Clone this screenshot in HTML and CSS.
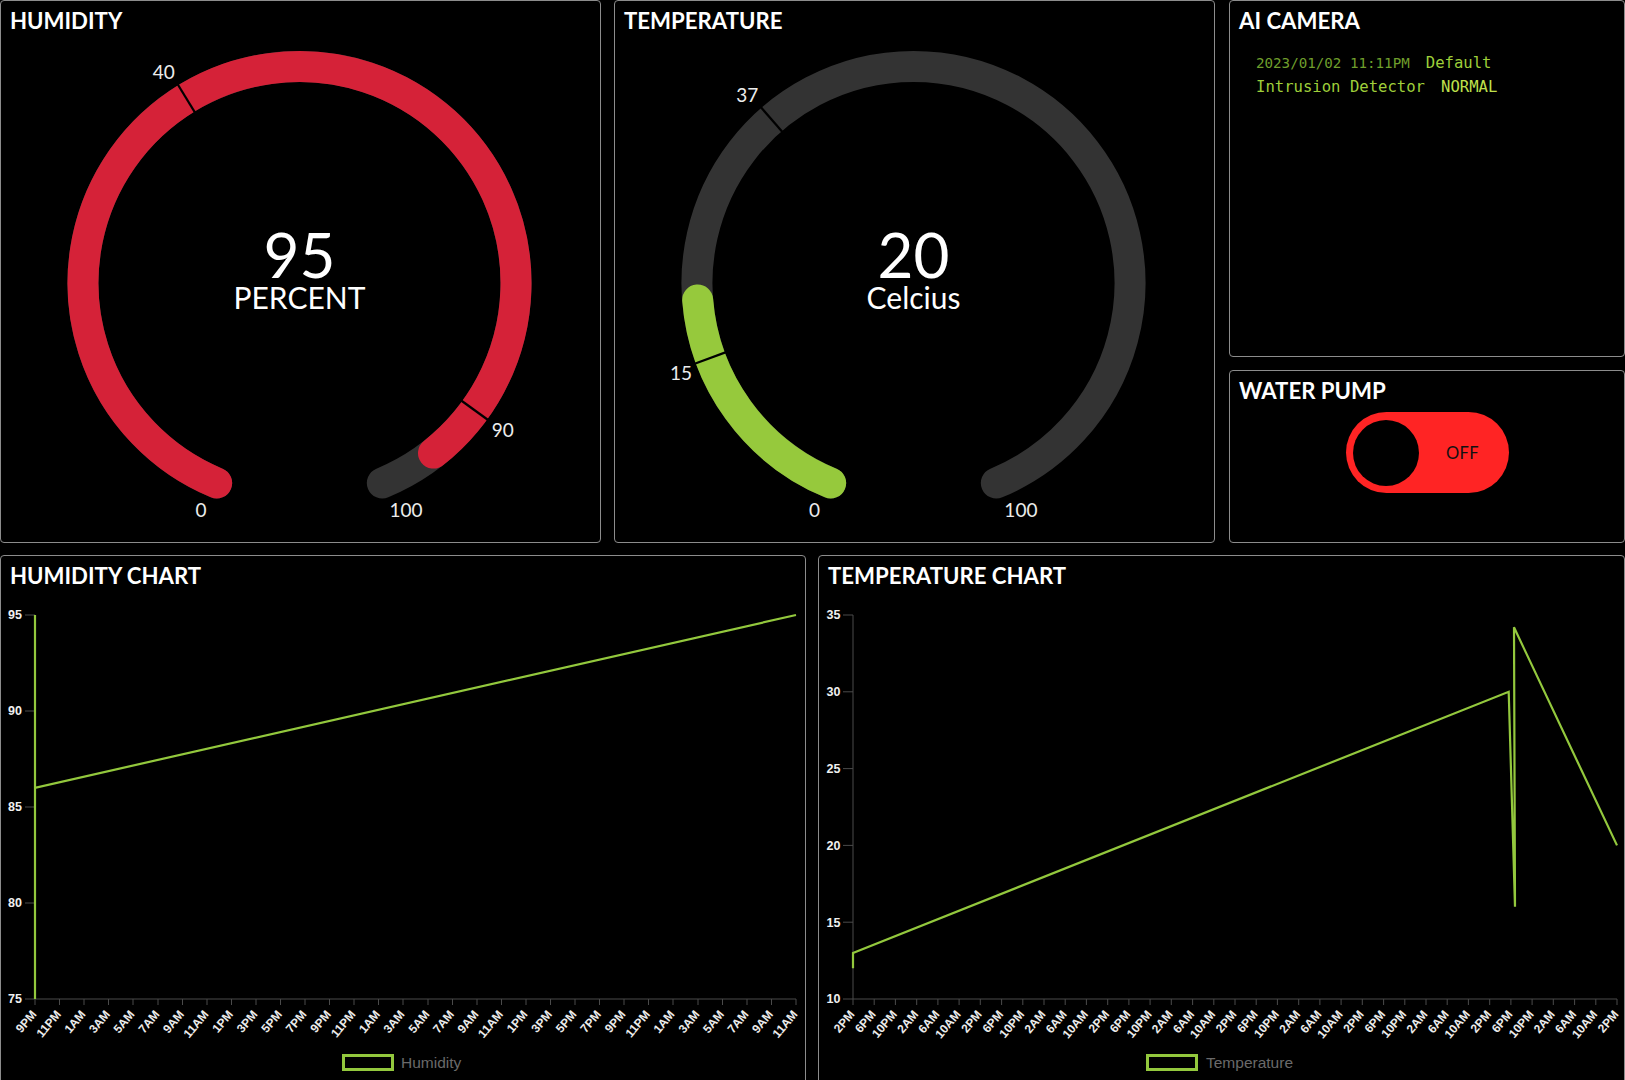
FILE: index.html
```html
<!DOCTYPE html>
<html lang="en">
<head>
<meta charset="utf-8">
<title>Dashboard</title>
<link rel="stylesheet" href="styles.css">
</head>
<body>
<main class="dash">
  <div class="row-top">
    <section class="card">
      <h2 class="card-title">HUMIDITY</h2>
      <svg class="gauge" viewBox="0 0 599 501" width="599" height="501">
        <path class="arc-track" d="M215.65 442.02 A216.5 216.5 0 1 1 381.35 442.02"/>
        <path class="arc-red" d="M215.65 442.02 A216.5 216.5 0 1 1 432.5 412.05"/>
        <line class="tick" x1="194.5" y1="72.3" x2="176.2" y2="42.5"/>
        <line class="tick" x1="459.5" y1="359" x2="487.8" y2="379.5"/>
        <text class="g-label" x="200" y="469" dy=".36em">0</text>
        <text class="g-label" x="405" y="469" dy=".36em">100</text>
        <text class="g-label" x="162.7" y="31.5" dy=".36em">40</text>
        <text class="g-label" x="501.7" y="389.5" dy=".36em">90</text>
        <text class="g-value" x="298.5" y="236.8">95</text>
        <text class="g-unit" x="298.5" y="268">PERCENT</text>
      </svg>
    </section>
    <section class="card">
      <h2 class="card-title">TEMPERATURE</h2>
      <svg class="gauge" viewBox="0 0 599 501" width="599" height="501">
        <path class="arc-track" d="M215.65 442.02 A216.5 216.5 0 1 1 381.35 442.02"/>
        <path class="arc-green" d="M215.65 442.02 A216.5 216.5 0 0 1 82.67 258.99"/>
        <line class="tick" x1="111.8" y1="310.9" x2="79" y2="323"/>
        <line class="tick" x1="168.1" y1="91.7" x2="145.1" y2="65.3"/>
        <text class="g-label" x="199.6" y="469" dy=".36em">0</text>
        <text class="g-label" x="405.9" y="469" dy=".36em">100</text>
        <text class="g-label" x="132.3" y="53.8" dy=".36em">37</text>
        <text class="g-label" x="66" y="332.5" dy=".36em">15</text>
        <text class="g-value" x="298.5" y="236.8">20</text>
        <text class="g-unit" x="298.5" y="268">Celcius</text>
      </svg>
    </section>
    <div class="side">
      <section class="card camera">
        <h2 class="card-title">AI CAMERA</h2>
        <div class="log">
          <div class="log-row"><span class="log-time">2023/01/02 11:11PM</span><span class="log-msg">Default</span></div>
          <div class="log-row"><span class="log-msg">Intrusion Detector</span><span class="log-status">NORMAL</span></div>
        </div>
      </section>
      <section class="card pump">
        <h2 class="card-title">WATER PUMP</h2>
        <div class="pump-body">
          <div class="toggle">
            <span class="knob"></span>
            <span class="toggle-text">OFF</span>
          </div>
        </div>
      </section>
    </div>
  </div>
  <div class="row-bottom">
    <section class="card chart-card">
      <h2 class="card-title">HUMIDITY CHART</h2>
      <svg class="chart" viewBox="0 0 804 498" width="804" height="498">
        <path class="axis" d="M34 19V403H795"/>
        <path class="axis" d="M24 19H34M24 115H34M24 211H34M24 307H34M24 403H34"/>
        <path class="axis" d="M34 403v6M58.5 403v6M83 403v6M107.5 403v6M132 403v6M157 403v6M181.5 403v6M206 403v6M230.5 403v6M255 403v6M279.5 403v6M304 403v6M328.5 403v6M353 403v6M377.5 403v6M402 403v6M427 403v6M451.5 403v6M476 403v6M500.5 403v6M525 403v6M549.5 403v6M574 403v6M598.5 403v6M623 403v6M647.5 403v6M672 403v6M697 403v6M721.5 403v6M746 403v6M770.5 403v6M795 403v6"/>
        <g class="y-labels">
          <text x="21" y="19" dy=".35em">95</text>
          <text x="21" y="115" dy=".35em">90</text>
          <text x="21" y="211" dy=".35em">85</text>
          <text x="21" y="307" dy=".35em">80</text>
          <text x="21" y="403" dy=".35em">75</text>
        </g>
        <g class="x-labels">
          <text transform="translate(33 416) rotate(-50)" dy=".35em">9PM</text>
          <text transform="translate(57.5 416) rotate(-50)" dy=".35em">11PM</text>
          <text transform="translate(82 416) rotate(-50)" dy=".35em">1AM</text>
          <text transform="translate(106.5 416) rotate(-50)" dy=".35em">3AM</text>
          <text transform="translate(131 416) rotate(-50)" dy=".35em">5AM</text>
          <text transform="translate(156 416) rotate(-50)" dy=".35em">7AM</text>
          <text transform="translate(180.5 416) rotate(-50)" dy=".35em">9AM</text>
          <text transform="translate(205 416) rotate(-50)" dy=".35em">11AM</text>
          <text transform="translate(229.5 416) rotate(-50)" dy=".35em">1PM</text>
          <text transform="translate(254 416) rotate(-50)" dy=".35em">3PM</text>
          <text transform="translate(278.5 416) rotate(-50)" dy=".35em">5PM</text>
          <text transform="translate(303 416) rotate(-50)" dy=".35em">7PM</text>
          <text transform="translate(327.5 416) rotate(-50)" dy=".35em">9PM</text>
          <text transform="translate(352 416) rotate(-50)" dy=".35em">11PM</text>
          <text transform="translate(376.5 416) rotate(-50)" dy=".35em">1AM</text>
          <text transform="translate(401 416) rotate(-50)" dy=".35em">3AM</text>
          <text transform="translate(426 416) rotate(-50)" dy=".35em">5AM</text>
          <text transform="translate(450.5 416) rotate(-50)" dy=".35em">7AM</text>
          <text transform="translate(475 416) rotate(-50)" dy=".35em">9AM</text>
          <text transform="translate(499.5 416) rotate(-50)" dy=".35em">11AM</text>
          <text transform="translate(524 416) rotate(-50)" dy=".35em">1PM</text>
          <text transform="translate(548.5 416) rotate(-50)" dy=".35em">3PM</text>
          <text transform="translate(573 416) rotate(-50)" dy=".35em">5PM</text>
          <text transform="translate(597.5 416) rotate(-50)" dy=".35em">7PM</text>
          <text transform="translate(622 416) rotate(-50)" dy=".35em">9PM</text>
          <text transform="translate(646.5 416) rotate(-50)" dy=".35em">11PM</text>
          <text transform="translate(671 416) rotate(-50)" dy=".35em">1AM</text>
          <text transform="translate(696 416) rotate(-50)" dy=".35em">3AM</text>
          <text transform="translate(720.5 416) rotate(-50)" dy=".35em">5AM</text>
          <text transform="translate(745 416) rotate(-50)" dy=".35em">7AM</text>
          <text transform="translate(769.5 416) rotate(-50)" dy=".35em">9AM</text>
          <text transform="translate(794 416) rotate(-50)" dy=".35em">11AM</text>
        </g>
        <polyline class="series" points="34,403 34,19 34,191.8 795,19"/>
        <rect class="legend-box" x="342.5" y="459.5" width="49" height="14"/>
        <text class="legend-text" x="400" y="467" dy=".35em">Humidity</text>
      </svg>
    </section>
    <section class="card chart-card">
      <h2 class="card-title">TEMPERATURE CHART</h2>
      <svg class="chart" viewBox="0 0 805 498" width="805" height="498">
        <path class="axis" d="M34 19V403H798"/>
        <path class="axis" d="M24 19H34M24 95.8H34M24 172.6H34M24 249.4H34M24 326.2H34M24 403H34"/>
        <path class="axis" d="M34 403v6M55.2 403v6M76.4 403v6M97.7 403v6M118.9 403v6M140.1 403v6M161.3 403v6M182.6 403v6M203.8 403v6M225 403v6M246.2 403v6M267.4 403v6M288.7 403v6M309.9 403v6M331.1 403v6M352.3 403v6M373.6 403v6M394.8 403v6M416 403v6M437.2 403v6M458.4 403v6M479.7 403v6M500.9 403v6M522.1 403v6M543.3 403v6M564.6 403v6M585.8 403v6M607 403v6M628.2 403v6M649.4 403v6M670.7 403v6M691.9 403v6M713.1 403v6M734.3 403v6M755.6 403v6M776.8 403v6M798 403v6"/>
        <g class="y-labels">
          <text x="21.5" y="19" dy=".35em">35</text>
          <text x="21.5" y="95.8" dy=".35em">30</text>
          <text x="21.5" y="172.6" dy=".35em">25</text>
          <text x="21.5" y="249.4" dy=".35em">20</text>
          <text x="21.5" y="326.2" dy=".35em">15</text>
          <text x="21.5" y="403" dy=".35em">10</text>
        </g>
        <g class="x-labels">
          <text transform="translate(33 416) rotate(-50)" dy=".35em">2PM</text>
          <text transform="translate(54.2 416) rotate(-50)" dy=".35em">6PM</text>
          <text transform="translate(75.4 416) rotate(-50)" dy=".35em">10PM</text>
          <text transform="translate(96.7 416) rotate(-50)" dy=".35em">2AM</text>
          <text transform="translate(117.9 416) rotate(-50)" dy=".35em">6AM</text>
          <text transform="translate(139.1 416) rotate(-50)" dy=".35em">10AM</text>
          <text transform="translate(160.3 416) rotate(-50)" dy=".35em">2PM</text>
          <text transform="translate(181.6 416) rotate(-50)" dy=".35em">6PM</text>
          <text transform="translate(202.8 416) rotate(-50)" dy=".35em">10PM</text>
          <text transform="translate(224 416) rotate(-50)" dy=".35em">2AM</text>
          <text transform="translate(245.2 416) rotate(-50)" dy=".35em">6AM</text>
          <text transform="translate(266.4 416) rotate(-50)" dy=".35em">10AM</text>
          <text transform="translate(287.7 416) rotate(-50)" dy=".35em">2PM</text>
          <text transform="translate(308.9 416) rotate(-50)" dy=".35em">6PM</text>
          <text transform="translate(330.1 416) rotate(-50)" dy=".35em">10PM</text>
          <text transform="translate(351.3 416) rotate(-50)" dy=".35em">2AM</text>
          <text transform="translate(372.6 416) rotate(-50)" dy=".35em">6AM</text>
          <text transform="translate(393.8 416) rotate(-50)" dy=".35em">10AM</text>
          <text transform="translate(415 416) rotate(-50)" dy=".35em">2PM</text>
          <text transform="translate(436.2 416) rotate(-50)" dy=".35em">6PM</text>
          <text transform="translate(457.4 416) rotate(-50)" dy=".35em">10PM</text>
          <text transform="translate(478.7 416) rotate(-50)" dy=".35em">2AM</text>
          <text transform="translate(499.9 416) rotate(-50)" dy=".35em">6AM</text>
          <text transform="translate(521.1 416) rotate(-50)" dy=".35em">10AM</text>
          <text transform="translate(542.3 416) rotate(-50)" dy=".35em">2PM</text>
          <text transform="translate(563.6 416) rotate(-50)" dy=".35em">6PM</text>
          <text transform="translate(584.8 416) rotate(-50)" dy=".35em">10PM</text>
          <text transform="translate(606 416) rotate(-50)" dy=".35em">2AM</text>
          <text transform="translate(627.2 416) rotate(-50)" dy=".35em">6AM</text>
          <text transform="translate(648.4 416) rotate(-50)" dy=".35em">10AM</text>
          <text transform="translate(669.7 416) rotate(-50)" dy=".35em">2PM</text>
          <text transform="translate(690.9 416) rotate(-50)" dy=".35em">6PM</text>
          <text transform="translate(712.1 416) rotate(-50)" dy=".35em">10PM</text>
          <text transform="translate(733.3 416) rotate(-50)" dy=".35em">2AM</text>
          <text transform="translate(754.6 416) rotate(-50)" dy=".35em">6AM</text>
          <text transform="translate(775.8 416) rotate(-50)" dy=".35em">10AM</text>
          <text transform="translate(797 416) rotate(-50)" dy=".35em">2PM</text>
        </g>
        <polyline class="series" points="34,372.3 34,356.9 689.7,95.8 696,310.8 695,31.3 798,249.4"/>
        <rect class="legend-box" x="328.5" y="459.5" width="49" height="14"/>
        <text class="legend-text" x="387" y="467" dy=".35em">Temperature</text>
      </svg>
    </section>
  </div>
</main>
</body>
</html>
```

FILE: styles.css
```css
* { box-sizing: border-box; }

html, body {
  margin: 0;
  padding: 0;
  background: #000;
}

body {
  font-family: Lato, "Open Sans", "Liberation Sans", sans-serif;
  color: #fff;
}

.dash {
  display: flex;
  flex-direction: column;
  gap: 12px;
  width: 1625px;
}

.row-top {
  display: grid;
  grid-template-columns: 601px 601px 1fr;
  column-gap: 13px;
  height: 543px;
}

.row-bottom {
  display: grid;
  grid-template-columns: 806px 1fr;
  column-gap: 12px;
  height: 540px;
}

.card {
  border: 1px solid #8c8c8c;
  border-radius: 4px;
  background: #000;
  overflow: hidden;
}

.card-title {
  margin: 0;
  padding: 6px 8px 6px 9px;
  height: 40px;
  font-family: Lato, "Open Sans", sans-serif;
  font-weight: 700;
  font-size: 22.2px;
  line-height: 28px;
  color: #fff;
}

.gauge,
.chart {
  display: block;
}

/* gauges */
.arc-track,
.arc-red,
.arc-green {
  fill: none;
  stroke-width: 31;
  stroke-linecap: round;
}
.arc-track { stroke: #333333; }
.arc-red { stroke: #d52238; }
.arc-green { stroke: #96c93c; }

.tick {
  stroke: #000;
  stroke-width: 2.2;
}

.g-label {
  font-family: Lato, "Open Sans", sans-serif;
  font-size: 19px;
  fill: #ececec;
  text-anchor: middle;
}

.g-value {
  font-family: Lato, "Open Sans", sans-serif;
  font-size: 62px;
  fill: #fff;
  text-anchor: middle;
}

.g-unit {
  font-family: Lato, "Open Sans", sans-serif;
  font-size: 30px;
  fill: #fff;
  text-anchor: middle;
}

/* right column */
.side {
  display: flex;
  flex-direction: column;
  gap: 13px;
  margin-left: 1px;
}

.camera {
  height: 357px;
  flex: none;
}

.pump {
  flex: 1;
}

.log {
  padding: 10px 0 0 26px;
  font-family: "DejaVu Sans Mono", "Liberation Mono", monospace;
}

.log-row {
  display: flex;
  align-items: baseline;
  gap: 16px;
  height: 24px;
  line-height: 24px;
}

.log-time {
  font-size: 14.2px;
  color: #6f9e2c;
}

.log-msg {
  font-size: 15.6px;
  color: #9fcf3a;
}

.log-status {
  font-size: 15.6px;
  color: #bfe04c;
}

.pump-body {
  display: flex;
  justify-content: center;
  padding-top: 1px;
}

.toggle {
  width: 163px;
  height: 81px;
  border-radius: 41px;
  background: #ff2424;
  display: flex;
  align-items: center;
  padding: 0 7px;
}

.knob {
  width: 66px;
  height: 66px;
  border-radius: 50%;
  background: #000;
  flex: none;
}

.toggle-text {
  flex: 1;
  padding-left: 5px;
  text-align: center;
  font-family: Lato, "Open Sans", sans-serif;
  font-size: 16.5px;
  color: #111;
  letter-spacing: 0.4px;
}

/* charts */
.axis {
  fill: none;
  stroke: #4a4a4a;
  stroke-width: 1;
}

.y-labels text {
  font-family: "Liberation Sans", Arial, sans-serif;
  font-size: 12.5px;
  font-weight: 700;
  fill: #f0f0f0;
  text-anchor: end;
}

.x-labels text {
  font-family: "Liberation Sans", Arial, sans-serif;
  font-size: 12px;
  font-weight: 700;
  fill: #ececec;
  text-anchor: end;
}

.series {
  fill: none;
  stroke: #93c83d;
  stroke-width: 2.2;
  stroke-linejoin: miter;
}

.legend-box {
  fill: #000;
  stroke: #93c83d;
  stroke-width: 3;
}

.legend-text {
  font-family: "Liberation Sans", Arial, sans-serif;
  font-size: 15.5px;
  fill: #6a6a6a;
}
```
